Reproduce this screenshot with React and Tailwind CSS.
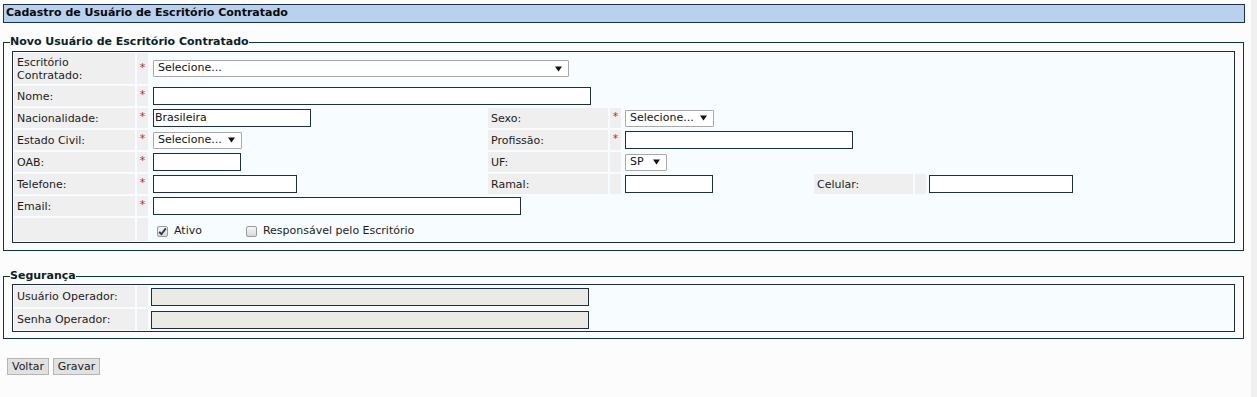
import React from "react";

const font = "font-['DejaVu_Sans',Verdana,sans-serif]";

function Arrow() {
  return (
    <svg width="7" height="6" viewBox="0 0 7 6" className="shrink-0">
      <path d="M0 0.5 H7 L3.5 5.5 Z" fill="#111" />
    </svg>
  );
}

function Select({ value, className }) {
  return (
    <div
      className={`flex h-[17px] items-center justify-between rounded-[1px] border border-[#a9a9a9] bg-white pl-[4px] pr-[6px] text-[#111] ${className}`}
    >
      <span>{value}</span>
      <Arrow />
    </div>
  );
}

function TextInput({ value = "", className }) {
  return (
    <div
      className={`flex h-[18px] items-center border border-[#1b2f4a] bg-white pl-[1px] text-[#111] ${className}`}
    >
      {value}
    </div>
  );
}

function Checkbox({ checked }) {
  return (
    <span className="flex h-[11px] w-[11px] items-center justify-center rounded-[2px] border border-[#9a9a9a] bg-gradient-to-b from-[#f6f6f6] to-[#d9d9d9]">
      {checked && (
        <svg width="9" height="9" viewBox="0 0 9 9">
          <path
            d="M1.2 4.8 L3.4 7.2 L7.8 1.4"
            fill="none"
            stroke="#2a3545"
            strokeWidth="1.8"
          />
        </svg>
      )}
    </span>
  );
}

function Label({ children, className = "" }) {
  return (
    <div className={`flex items-center bg-[#efefef] pl-[3px] leading-[13px] text-[#1c1c1c] ${className}`}>
      {children}
    </div>
  );
}

function Star({ show = true }) {
  return (
    <div className="flex items-center justify-center bg-[#efefef] pb-[3px] text-[11px] leading-[11px] text-[#c02a2a]">
      {show ? "*" : ""}
    </div>
  );
}

function Field({ children, className = "" }) {
  return <div className={`flex items-center ${className}`}>{children}</div>;
}

export default function App() {
  return (
    <div className={`min-h-[397px] w-[1257px] bg-[#fcfcfc] ${font} text-[11px]`}>
      <div className="flex">
        <div className="w-[1251px] px-[3px] pt-[4px]">
          <div className="flex h-[19px] w-[1242px] items-center border border-[#1b3050] bg-[#b8d1ec] pl-[2px] font-bold text-[#0a0a0a]">
            Cadastro de Usuário de Escritório Contratado
          </div>

          <fieldset className="mt-[12px] w-[1241px] border border-[#0b3838] px-[8px] pb-[7px] pt-[2px]">
            <legend className="-ml-[2px] px-0 font-bold leading-[14px] text-[#0d1f2a]">
              Novo Usuário de Escritório Contratado
            </legend>
            <div className="grid grid-cols-[121px_11px_336px_120px_11px_189px_99px_11px_1fr] grid-rows-[31px_20px_20px_20px_20px_20px_20px_23px] gap-[2px] border border-[#1b2b45] bg-[#f7fdff] p-px">
              <Label className="pr-[20px]">Escritório Contratado:</Label>
              <Star />
              <Field className="col-span-7 pl-[3px]">
                <Select value="Selecione..." className="w-[416px]" />
              </Field>

              <Label>Nome:</Label>
              <Star />
              <Field className="col-span-7 pl-[3px]">
                <TextInput className="w-[438px]" />
              </Field>

              <Label>Nacionalidade:</Label>
              <Star />
              <Field className="pl-[3px]">
                <TextInput value="Brasileira" className="w-[158px]" />
              </Field>
              <Label>Sexo:</Label>
              <Star />
              <Field className="col-span-4 pl-[2px]">
                <Select value="Selecione..." className="w-[89px]" />
              </Field>

              <Label>Estado Civil:</Label>
              <Star />
              <Field className="pl-[3px]">
                <Select value="Selecione..." className="w-[89px]" />
              </Field>
              <Label>Profissão:</Label>
              <Star />
              <Field className="col-span-4 pl-[2px]">
                <TextInput className="w-[228px]" />
              </Field>

              <Label>OAB:</Label>
              <Star />
              <Field className="pl-[3px]">
                <TextInput className="w-[88px]" />
              </Field>
              <Label>UF:</Label>
              <Star show={false} />
              <Field className="col-span-4 pl-[2px]">
                <Select value="SP" className="w-[42px]" />
              </Field>

              <Label>Telefone:</Label>
              <Star />
              <Field className="pl-[3px]">
                <TextInput className="w-[144px]" />
              </Field>
              <Label>Ramal:</Label>
              <Star show={false} />
              <Field className="pl-[2px]">
                <TextInput className="w-[88px]" />
              </Field>
              <Label>Celular:</Label>
              <Star show={false} />
              <Field className="pl-[1px]">
                <TextInput className="w-[144px]" />
              </Field>

              <Label>Email:</Label>
              <Star />
              <Field className="col-span-7 pl-[3px]">
                <TextInput className="w-[368px]" />
              </Field>

              <Label />
              <Star show={false} />
              <Field className="col-span-7 gap-[6px] pl-[7px] pt-[3px] text-[#1c1c1c]">
                <Checkbox checked />
                <span className="mr-[38px]">Ativo</span>
                <Checkbox />
                <span>Responsável pelo Escritório</span>
              </Field>
            </div>
          </fieldset>

          <fieldset className="mt-[18px] w-[1241px] border border-[#0b3838] px-[8px] pb-[6px] pt-[1px]">
            <legend className="-ml-[2px] px-0 font-bold leading-[14px] text-[#0d1f2a]">
              Segurança
            </legend>
            <div className="grid grid-cols-[121px_11px_1fr] grid-rows-[21px_21px] gap-[2px] border border-[#1b2b45] bg-[#f7fdff] p-px">
              <Label>Usuário Operador:</Label>
              <Star show={false} />
              <Field className="pl-[1px]">
                <div className="h-[18px] w-[438px] border border-[#1b2f4a] bg-[#ebeae4]" />
              </Field>
              <Label>Senha Operador:</Label>
              <Star show={false} />
              <Field className="pl-[1px]">
                <div className="h-[18px] w-[438px] border border-[#1b2f4a] bg-[#ebeae4]" />
              </Field>
            </div>
          </fieldset>

          <div className="ml-[4px] mt-[19px] flex gap-[4px]">
            <button className="h-[17px] w-[42px] border border-[#b5b5b5] bg-[#e1e1e1] text-[11px] leading-[15px] text-[#1c1c1c]">
              Voltar
            </button>
            <button className="h-[17px] w-[47px] border border-[#b5b5b5] bg-[#e1e1e1] text-[11px] leading-[15px] text-[#1c1c1c]">
              Gravar
            </button>
          </div>
        </div>
        <div className="min-h-[397px] flex-1 bg-[#f0f0f0]" />
      </div>
    </div>
  );
}
